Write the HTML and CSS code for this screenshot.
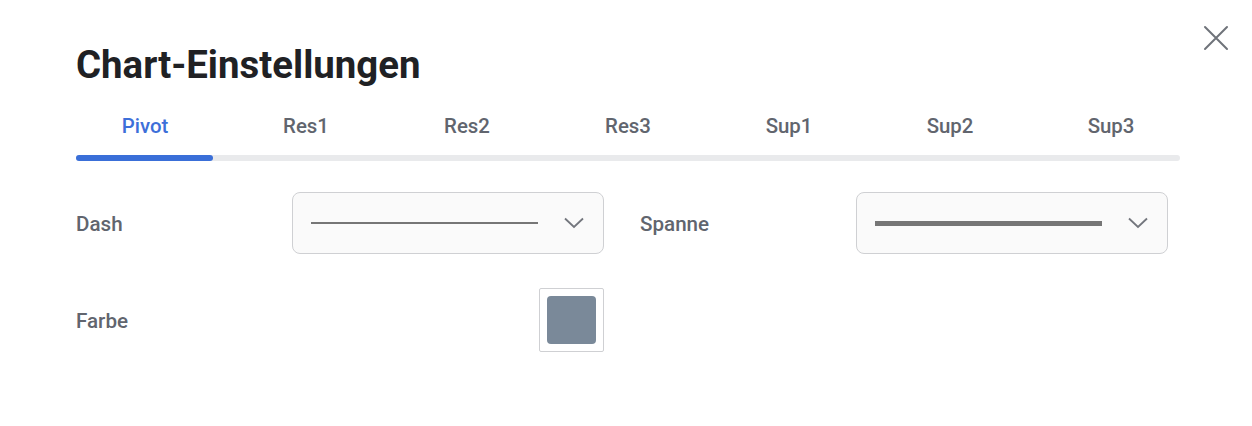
FILE: index.html
```html
<!DOCTYPE html>
<html lang="de">
<head>
<meta charset="utf-8">
<link rel="stylesheet" href="styles.css">
</head>
<body>
<div class="modal">
  <button class="close" aria-label="Schließen">
    <svg width="26" height="26" viewBox="0 0 26 26"><path d="M2 2 L24 24 M24 2 L2 24" stroke="#6f737a" stroke-width="2" fill="none" stroke-linecap="round"/></svg>
  </button>
  <h1 class="title">Chart-Einstellungen</h1>
  <div class="tabs">
    <div class="tab active">Pivot</div>
    <div class="tab">Res1</div>
    <div class="tab">Res2</div>
    <div class="tab">Res3</div>
    <div class="tab">Sup1</div>
    <div class="tab">Sup2</div>
    <div class="tab">Sup3</div>
  </div>
  <div class="track"><div class="indicator"></div></div>
  <div class="form">
    <div class="field">
      <div class="label">Dash</div>
      <div class="select">
        <div class="line thin"></div>
        <svg class="chev" width="20" height="12" viewBox="0 0 20 12"><path d="M1 1.5 L10 10 L19 1.5" stroke="#73767d" stroke-width="1.8" fill="none"/></svg>
      </div>
    </div>
    <div class="field">
      <div class="label">Spanne</div>
      <div class="select">
        <div class="line thick"></div>
        <svg class="chev" width="20" height="12" viewBox="0 0 20 12"><path d="M1 1.5 L10 10 L19 1.5" stroke="#73767d" stroke-width="1.8" fill="none"/></svg>
      </div>
    </div>
    <div class="field">
      <div class="label">Farbe</div>
      <div class="color-cell">
        <div class="swatch-box"><div class="swatch"></div></div>
      </div>
    </div>
  </div>
</div>
</body>
</html>
```

FILE: styles.css
```css
* { box-sizing: border-box; }
html, body { margin: 0; padding: 0; background: #fff; }
body { font-family: Roboto, "Noto Sans", sans-serif; }
.modal {
  position: relative;
  width: 1252px;
  height: 426px;
  padding: 40px 72px 0 76px;
}
.close {
  position: absolute;
  top: 25px;
  right: 23px;
  background: none;
  border: 0;
  padding: 0;
  width: 26px;
  height: 26px;
  cursor: pointer;
}
.title {
  margin: 0;
  font-size: 38.4px;
  font-weight: 700;
  color: #202124;
  line-height: 50px;
}
.tabs {
  display: flex;
  justify-content: space-between;
  margin-top: 24px;
  width: 1104px;
}
.tab {
  width: 138px;
  text-align: center;
  font-size: 20.4px;
  font-weight: 500;
  color: #61656e;
  line-height: 24px;
}
.tab.active { color: #3d6fd9; }
.track {
  margin-top: 17px;
  width: 1104px;
  height: 6px;
  border-radius: 3px;
  background: #e9eaec;
}
.indicator {
  width: 137px;
  height: 6px;
  border-radius: 3px;
  background: #3a6fd8;
}
.form {
  display: grid;
  grid-template-columns: 528px 528px;
  column-gap: 36px;
  row-gap: 34px;
  margin-top: 31px;
}
.field {
  display: grid;
  grid-template-columns: 216px 312px;
  align-items: center;
}
.label {
  font-size: 20.6px;
  font-weight: 500;
  color: #61656e;
  padding-top: 1px;
}
.select {
  height: 62px;
  border: 1px solid #cfd0d3;
  border-radius: 8px;
  background: #fafafa;
  display: flex;
  align-items: center;
  padding: 0 19px 0 18px;
  gap: 26px;
}
.line { flex: 1; background: #767676; }
.line.thin { height: 2px; }
.line.thick { height: 5px; }
.chev { flex: none; }
.color-cell { display: flex; justify-content: flex-end; }
.swatch-box {
  width: 65px;
  height: 64px;
  border: 1px solid #cfd0d3;
  border-radius: 2px;
  padding: 7px;
  background: #fff;
}
.swatch {
  width: 100%;
  height: 100%;
  border-radius: 4px;
  background: #7a8999;
}
```
